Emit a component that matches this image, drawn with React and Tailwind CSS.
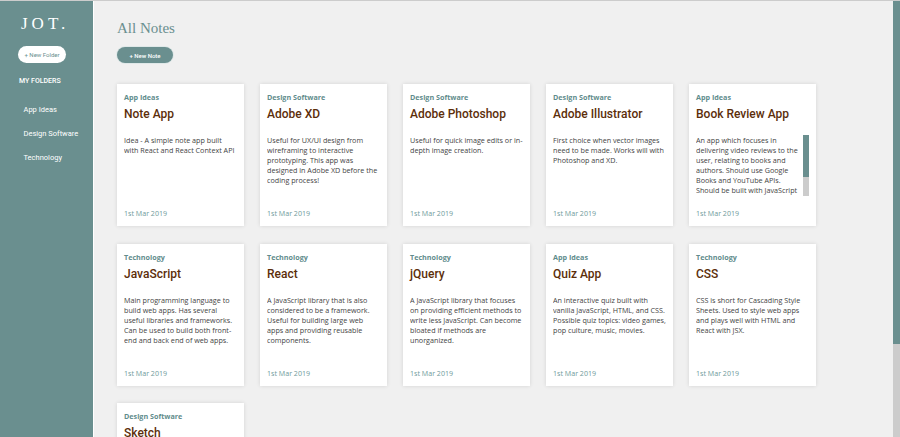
import React from "react";

const folders = ["App Ideas", "Design Software", "Technology"];

const notes = [
  { folder: "App Ideas", title: "Note App", body: "Idea - A simple note app built with React and React Context API" },
  { folder: "Design Software", title: "Adobe XD", body: "Useful for UX/UI design from wireframing to interactive prototyping. This app was designed in Adobe XD before the coding process!" },
  { folder: "Design Software", title: "Adobe Photoshop", body: "Useful for quick image edits or in-depth image creation." },
  { folder: "Design Software", title: "Adobe Illustrator", body: "First choice when vector images need to be made. Works will with Photoshop and XD." },
  { folder: "App Ideas", title: "Book Review App", body: "An app which focuses in delivering video reviews to the user, relating to books and authors. Should use Google Books and YouTube APIs. Should be built with JavaScript", scroll: true },
  { folder: "Technology", title: "JavaScript", body: "Main programming language to build web apps. Has several useful libraries and frameworks. Can be used to build both front-end and back end of web apps." },
  { folder: "Technology", title: "React", body: "A JavaScript library that is also considered to be a framework. Useful for building large web apps and providing reusable components." },
  { folder: "Technology", title: "jQuery", body: "A JavaScript library that focuses on providing efficient methods to write less JavaScript. Can become bloated if methods are unorganized." },
  { folder: "App Ideas", title: "Quiz App", body: "An interactive quiz built with vanilla JavaScript, HTML, and CSS. Possible quiz topics: video games, pop culture, music, movies." },
  { folder: "Technology", title: "CSS", body: "CSS is short for Cascading Style Sheets. Used to style web apps and plays well with HTML and React with JSX." },
  { folder: "Design Software", title: "Sketch", body: "" },
];

function NoteCard({ note }) {
  return (
    <div className="flex h-[142px] w-[127px] flex-col bg-white pl-[7px] pr-[7px] shadow-[0_0_4px_rgba(0,0,0,0.12)]">
      <p className="mt-[8px] font-['Open_Sans',sans-serif] text-[7.2px] leading-[11px] font-bold text-[#5f8c8c]">{note.folder}</p>
      <h2 className="mt-[2px] font-['Roboto',sans-serif] text-[12px] leading-[18px] font-medium text-[#5c2e0a]">{note.title}</h2>
      <div className="relative mt-[12px] h-[61px] overflow-hidden font-['Open_Sans',sans-serif] text-[7.2px] leading-[10px] text-[#444]">
        <p className={note.scroll ? "w-[108px]" : "w-[113px]"}>{note.body}</p>
        {note.scroll && (
          <div className="absolute top-0 right-0 h-[61px] w-[6px] bg-[#ccc]">
            <div className="h-[42px] bg-[#6a8f8f]" />
          </div>
        )}
      </div>
      <p className="mt-auto mb-[8px] font-['Open_Sans',sans-serif] text-[7.1px] leading-[10px] text-[#6f9a9a]">1st Mar 2019</p>
    </div>
  );
}

export default function App() {
  return (
    <div className="relative flex h-[437px] w-[900px] overflow-hidden border-t border-[#ccc] bg-[#f0f0f0]">
      {/* Sidebar */}
      <aside className="flex h-full w-[94px] shrink-0 flex-col border-r border-white bg-[#6a8f8f]">
        <h1 className="mt-[12px] pl-[21px] font-['Liberation_Serif',serif] text-[17px] leading-[22px] tracking-[4px] text-white">JOT.</h1>
        <button className="mt-[11px] ml-[18px] h-[17px] w-[48px] rounded-full bg-white font-['Roboto',sans-serif] text-[6px] text-[#6a8f8f]">+ New Folder</button>
        <p className="mt-[13px] pl-[19px] font-['Roboto',sans-serif] text-[7px] leading-[10px] font-medium text-white">MY FOLDERS</p>
        <ul className="mt-[18px] flex flex-col gap-[13px] pl-[23.5px]">
          {folders.map((f) => (
            <li key={f} className="font-['Roboto',sans-serif] text-[7.5px] leading-[11px] text-white">{f}</li>
          ))}
        </ul>
      </aside>

      {/* Main */}
      <main className="h-full flex-1 overflow-hidden pl-[23px]">
        <h1 className="mt-[16px] font-['Liberation_Serif',serif] text-[15px] leading-[22px] text-[#6a8f8f]">All Notes</h1>
        <button className="mt-[8px] block h-[16px] w-[56px] rounded-full bg-[#6a8f8f] font-['Roboto',sans-serif] text-[6px] font-medium text-white shadow-[0_0_0_1px_#dfe8e8]">+ New Note</button>
        <div className="mt-[21px] flex w-[720px] flex-wrap gap-x-[16px] gap-y-[17.5px] pb-[12px]">
          {notes.map((n) => (
            <NoteCard key={n.title} note={n} />
          ))}
        </div>
      </main>

      {/* page scrollbar */}
      <div className="absolute top-0 right-0 h-full w-[7px] bg-[#ccc]">
        <div className="h-[343px] bg-[#6a8f8f]" />
      </div>
    </div>
  );
}
